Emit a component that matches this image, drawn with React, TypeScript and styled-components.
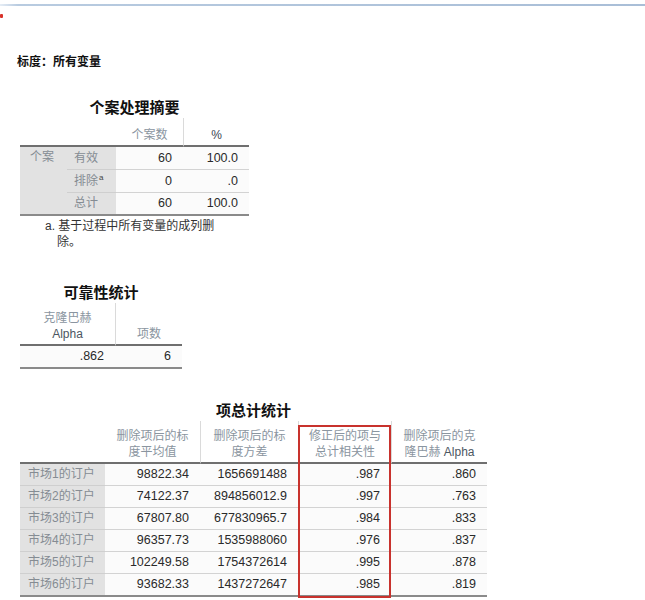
import React from "react";
import styled, { createGlobalStyle } from "styled-components";

const GlobalStyle = createGlobalStyle`
  html, body { margin: 0; padding: 0; background: #fff; }
  body {
    font-family: "Liberation Sans", "Noto Sans CJK SC", sans-serif;
    color: #333;
  }
`;

const Page = styled.div`
  position: relative;
  width: 645px;
  height: 600px;
  overflow: hidden;
  background: #fff;
`;

const TopRule = styled.div`
  margin-top: 4px;
  height: 2px;
  background: linear-gradient(to right, #e6edf5 0px, #b8cbe0 18px, #a9bed7 100%);
`;

const Marker = styled.div`
  width: 3px;
  height: 4px;
  margin-top: 8px;
  background: #d8322a;
  border-radius: 1px;
`;

const ScaleTitle = styled.h1`
  margin: 36px 0 0 17px;
  font-size: 12px;
  line-height: 16px;
  font-weight: 700;
  color: #111;
`;

const Section = styled.section<{ $top: number }>`
  position: relative;
  margin: ${(p) => p.$top}px 0 0 20px;
  width: fit-content;
`;

const Table = styled.table`
  border-collapse: separate;
  border-spacing: 0;
  table-layout: fixed;
`;

const Caption = styled.caption`
  caption-side: top;
  font-size: 15px;
  line-height: 20px;
  font-weight: 700;
  color: #111;
  padding: 0;
  text-align: center;
`;

const Col = styled.col<{ $w: number }>`
  width: ${(p) => p.$w}px;
`;

const Head = styled.th<{ $h: number; $divider?: boolean; $dark?: boolean }>`
  height: ${(p) => p.$h}px;
  padding: 0 4px 2px;
  vertical-align: bottom;
  text-align: center;
  font-size: 12px;
  line-height: 16px;
  font-weight: 400;
  color: ${(p) => (p.$dark ? "#3c4752" : "#8a95a0")};
  border-bottom: 2px solid #6f6f6f;
  border-left: ${(p) => (p.$divider ? "1px solid #dadada" : "none")};
  white-space: nowrap;
`;

const Latin = styled.span`
  color: #4c5661;
`;

const RowLabel = styled.td<{ $last?: boolean; $pad: number; $top?: boolean }>`
  height: 21px;
  padding: 0 0 0 ${(p) => p.$pad}px;
  background: #e2e2e2;
  color: #858c93;
  font-size: 12px;
  line-height: 21px;
  vertical-align: ${(p) => (p.$top ? "top" : "middle")};
  white-space: nowrap;
  border-bottom: ${(p) => (p.$last ? "2px solid #8a8a8a" : "1px solid #cfcfcf")};
`;

const Num = styled.td<{ $last?: boolean; $h?: number }>`
  height: ${(p) => p.$h ?? 21}px;
  padding: 0 11px 0 0;
  text-align: right;
  background: #fbfbfb;
  color: #2a2a2a;
  font-size: 12.5px;
  line-height: 21px;
  white-space: nowrap;
  border-bottom: ${(p) => (p.$last ? "2px solid #8a8a8a" : "1px solid #d3d3d3")};
`;

const Sup = styled.sup`
  font-size: 8px;
  color: #444;
  vertical-align: 5px;
  line-height: 0;
  margin-left: 1px;
`;

const Footnote = styled.p`
  margin: 2px 0 0 25px;
  padding-left: 12px;
  text-indent: -12px;
  font-size: 12px;
  line-height: 16px;
  color: #333;
`;

const Highlight = styled.div`
  position: absolute;
  left: 278px;
  top: 24px;
  width: 93px;
  height: 173px;
  box-sizing: border-box;
  border: 2px solid #c8322d;
  pointer-events: none;
`;

const items = [
  ["市场1的订户", "98822.34", "1656691488", ".987", ".860"],
  ["市场2的订户", "74122.37", "894856012.9", ".997", ".763"],
  ["市场3的订户", "67807.80", "677830965.7", ".984", ".833"],
  ["市场4的订户", "96357.73", "1535988060", ".976", ".837"],
  ["市场5的订户", "102249.58", "1754372614", ".995", ".878"],
  ["市场6的订户", "93682.33", "1437272647", ".985", ".819"],
];

export default function App() {
  return (
    <Page>
      <GlobalStyle />
      <TopRule />
      <Marker />
      <ScaleTitle>标度：所有变量</ScaleTitle>

      <Section $top={28}>
        <Table>
          <Caption>个案处理摘要</Caption>
          <colgroup>
            <Col $w={47} />
            <Col $w={49} />
            <Col $w={67} />
            <Col $w={66} />
          </colgroup>
          <thead>
            <tr>
              <Head $h={25} colSpan={2}></Head>
              <Head $h={25}>个案数</Head>
              <Head $h={25} $divider $dark>
                %
              </Head>
            </tr>
          </thead>
          <tbody>
            <tr>
              <RowLabel rowSpan={3} $pad={10} $top $last>
                个案
              </RowLabel>
              <RowLabel $pad={7}>有效</RowLabel>
              <Num $h={22}>60</Num>
              <Num $h={22}>100.0</Num>
            </tr>
            <tr>
              <RowLabel $pad={7}>
                排除<Sup>a</Sup>
              </RowLabel>
              <Num $h={22}>0</Num>
              <Num $h={22}>.0</Num>
            </tr>
            <tr>
              <RowLabel $pad={7} $last>
                总计
              </RowLabel>
              <Num $h={20} $last>
                60
              </Num>
              <Num $h={20} $last>
                100.0
              </Num>
            </tr>
          </tbody>
        </Table>
        <Footnote>
          a. 基于过程中所有变量的成列删
          <br />
          除。
        </Footnote>
      </Section>

      <Section $top={33}>
        <Table>
          <Caption>可靠性统计</Caption>
          <colgroup>
            <Col $w={95} />
            <Col $w={67} />
          </colgroup>
          <thead>
            <tr>
              <Head $h={39}>
                克隆巴赫
                <br />
                <Latin>Alpha</Latin>
              </Head>
              <Head $h={39} $divider>
                项数
              </Head>
            </tr>
          </thead>
          <tbody>
            <tr>
              <Num $h={20} $last>
                .862
              </Num>
              <Num $h={20} $last>
                6
              </Num>
            </tr>
          </tbody>
        </Table>
      </Section>

      <Section $top={32}>
        <Table>
          <Caption>项总计统计</Caption>
          <colgroup>
            <Col $w={85} />
            <Col $w={95} />
            <Col $w={98} />
            <Col $w={93} />
            <Col $w={96} />
          </colgroup>
          <thead>
            <tr>
              <Head $h={39}></Head>
              <Head $h={39}>
                删除项后的标
                <br />
                度平均值
              </Head>
              <Head $h={39} $divider>
                删除项后的标
                <br />
                度方差
              </Head>
              <Head $h={39} $divider>
                修正后的项与
                <br />
                总计相关性
              </Head>
              <Head $h={39} $divider>
                删除项后的克
                <br />
                隆巴赫 <Latin>Alpha</Latin>
              </Head>
            </tr>
          </thead>
          <tbody>
            {items.map((r, i) => {
              const last = i === items.length - 1;
              return (
                <tr key={r[0]}>
                  <RowLabel $pad={8} $last={last}>
                    {r[0]}
                  </RowLabel>
                  <Num $last={last} $h={last ? 20 : 21}>{r[1]}</Num>
                  <Num $last={last} $h={last ? 20 : 21}>{r[2]}</Num>
                  <Num $last={last} $h={last ? 20 : 21}>{r[3]}</Num>
                  <Num $last={last} $h={last ? 20 : 21}>{r[4]}</Num>
                </tr>
              );
            })}
          </tbody>
        </Table>
        <Highlight />
      </Section>
    </Page>
  );
}
